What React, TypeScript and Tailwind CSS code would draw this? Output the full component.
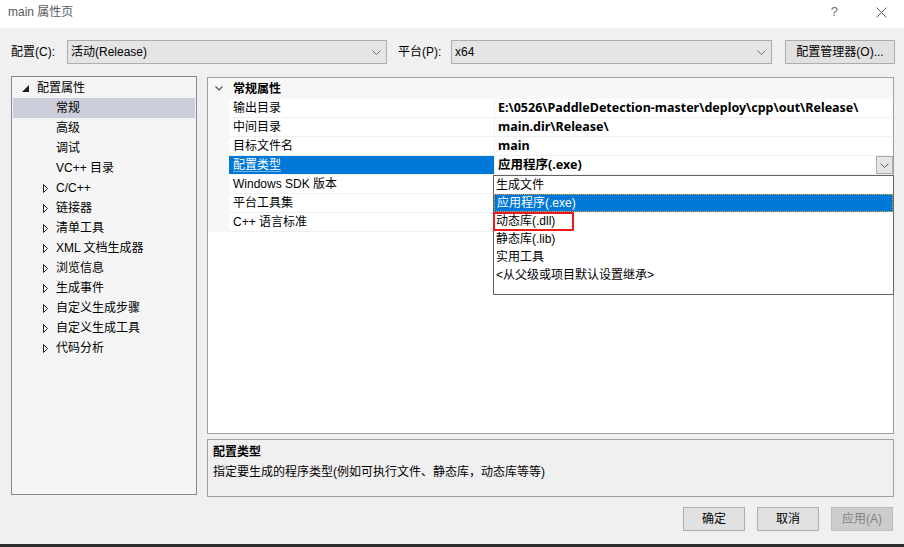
import React from 'react';

type TreeItem = { label: string; level: 0 | 1; arrow?: 'open' | 'closed'; selected?: boolean };

const tree: TreeItem[] = [
  { label: '配置属性', level: 0, arrow: 'open' },
  { label: '常规', level: 1, selected: true },
  { label: '高级', level: 1 },
  { label: '调试', level: 1 },
  { label: 'VC++ 目录', level: 1 },
  { label: 'C/C++', level: 1, arrow: 'closed' },
  { label: '链接器', level: 1, arrow: 'closed' },
  { label: '清单工具', level: 1, arrow: 'closed' },
  { label: 'XML 文档生成器', level: 1, arrow: 'closed' },
  { label: '浏览信息', level: 1, arrow: 'closed' },
  { label: '生成事件', level: 1, arrow: 'closed' },
  { label: '自定义生成步骤', level: 1, arrow: 'closed' },
  { label: '自定义生成工具', level: 1, arrow: 'closed' },
  { label: '代码分析', level: 1, arrow: 'closed' },
];

const props = [
  { name: '输出目录', value: 'E:\\0526\\PaddleDetection-master\\deploy\\cpp\\out\\Release\\' },
  { name: '中间目录', value: 'main.dir\\Release\\' },
  { name: '目标文件名', value: 'main' },
  { name: '配置类型', value: '应用程序(.exe)', selected: true },
  { name: 'Windows SDK 版本', value: '' },
  { name: '平台工具集', value: '' },
  { name: 'C++ 语言标准', value: '' },
];

const options = ['生成文件', '应用程序(.exe)', '动态库(.dll)', '静态库(.lib)', '实用工具', '<从父级或项目默认设置继承>'];

const Chevron = ({ color = '#606060' }: { color?: string }) => (
  <svg width="9" height="5" viewBox="0 0 9 5" fill="none">
    <path d="M0.5 0.5L4.5 4.5L8.5 0.5" stroke={color} strokeWidth="1" />
  </svg>
);

const Select = ({ text, width }: { text: string; width: string }) => (
  <div className={`${width} h-[24px] flex items-center justify-between bg-[#e5e5e5] border border-[#adadad] pl-[3px] pr-[5px]`}>
    <span className="text-[12px] leading-[16px] text-black">{text}</span>
    <Chevron color="#707070" />
  </div>
);

const Button = ({ text, disabled }: { text: string; disabled?: boolean }) => (
  <div
    className={`w-[62px] h-[24px] flex items-center justify-center border text-[12px] leading-[16px] ${
      disabled ? 'bg-[#cccccc] border-[#bfbfbf] text-[#838383]' : 'bg-[#e1e1e1] border-[#adadad] text-black'
    }`}
  >
    {text}
  </div>
);

const App = () => {
  return (
    <div className="w-[904px] h-[547px] flex flex-col bg-[#f0f0f0] overflow-hidden font-['Liberation_Sans','Noto_Sans_CJK_SC',sans-serif] text-black">
      {/* title bar */}
      <div className="h-[28px] bg-white flex items-center pl-[8px]">
        <span className="text-[12px] leading-[16px] text-[#5a5a5a] -mt-[4px]">main 属性页</span>
        <div className="ml-auto flex items-center -mt-[4px]">
          <span className="text-[13px] leading-[16px] text-[#707070] mr-[38px]">?</span>
          <svg width="11" height="11" viewBox="0 0 11 11" className="mr-[17px]">
            <path d="M0.5 0.5L10.5 10.5M10.5 0.5L0.5 10.5" stroke="#606060" strokeWidth="1" />
          </svg>
        </div>
      </div>

      {/* config row */}
      <div className="mt-[12px] h-[24px] flex items-center pl-[11px]">
        <span className="w-[56px] text-[12px] leading-[16px]">配置(C):</span>
        <Select text="活动(Release)" width="w-[320px]" />
        <span className="ml-[11px] w-[53px] text-[12px] leading-[16px]">平台(P):</span>
        <Select text="x64" width="w-[321px]" />
        <div className="ml-[13px] w-[110px] h-[24px] -mt-[1px] flex items-center justify-center bg-[#e1e1e1] border border-[#adadad] text-[12px] leading-[16px]">
          配置管理器(O)...
        </div>
      </div>

      {/* main area */}
      <div className="mt-[12px] h-[421px] flex">
        {/* tree */}
        <div className="ml-[11px] w-[186px] h-[419px] border border-[#828790] bg-[#f5f5f5] pt-px">
          {tree.map((t) => (
            <div
              key={t.label}
              className={`h-[20px] mx-px flex items-center text-[12px] leading-[16px] ${t.selected ? 'bg-[#cccedb]' : ''} ${
                t.level === 0 ? 'pl-[9px]' : t.arrow ? 'pl-[30px]' : 'pl-[43px]'
              }`}
            >
              {t.arrow === 'open' && (
                <svg width="7" height="7" viewBox="0 0 7 7" className="mr-[8px]">
                  <path d="M7 0V7H0Z" fill="#1e1e1e" />
                </svg>
              )}
              {t.arrow === 'closed' && (
                <svg width="5" height="9" viewBox="0 0 5 9" className="mr-[8px]">
                  <path d="M0.5 0.5L4.5 4.5L0.5 8.5Z" fill="none" stroke="#1e1e1e" strokeWidth="1" />
                </svg>
              )}
              <span>{t.label}</span>
            </div>
          ))}
        </div>

        {/* right column */}
        <div className="ml-[10px] w-[687px] flex flex-col">
          <div className="relative mt-px h-[358px] border border-[#a0a0a0] bg-white">
            {/* category */}
            <div className="h-[21px] flex items-center bg-[#f7f7f7]">
              <div className="w-[21px] flex justify-center">
                <svg width="8" height="5" viewBox="0 0 8 5" fill="none">
                  <path d="M0.5 0.5L4 4L7.5 0.5" stroke="#505050" strokeWidth="1.2" />
                </svg>
              </div>
              <span className="pl-[4px] text-[12px] leading-[16px] font-bold">常规属性</span>
            </div>
            {props.map((p) => (
              <div key={p.name} className="h-[19px] flex">
                <div className="w-[21px] bg-[#f7f7f7]" />
                <div
                  className={`w-[265px] flex items-center pl-[4px] text-[12px] leading-[16px] border-b border-[#f0f0f0] ${
                    p.selected ? 'bg-[#0078d7] text-white border-[#0078d7]' : ''
                  }`}
                >
                  <span className={p.selected ? 'underline decoration-[#7fb4e6] underline-offset-2' : ''}>{p.name}</span>
                </div>
                <div className="flex-1 flex items-center border-l border-b border-[#f0f0f0] pl-[3px] text-[12.5px] leading-[16px] font-bold font-['Noto_Sans','Noto_Sans_CJK_SC',sans-serif]">
                  <span>{p.value}</span>
                  {p.selected && (
                    <div className="ml-auto w-[17px] h-[18px] flex items-center justify-center bg-[#e5e5e5] border border-[#adadad]">
                      <Chevron color="#606060" />
                    </div>
                  )}
                </div>
              </div>
            ))}

            {/* open dropdown list */}
            <div className="absolute left-[285px] top-[97px] w-[401px] h-[120px] bg-white border border-[#646464]">
              {options.map((o, i) => (
                <div
                  key={o}
                  className={`relative h-[18px] flex items-center pl-[2px] text-[12px] leading-[16px] ${
                    i === 1 ? 'bg-[#0078d7] text-white border border-dotted border-[#f0a030]' : ''
                  }`}
                >
                  {o}
                  {i === 2 && (
                    <div className="absolute -left-px top-0 w-[81px] h-[19px] border-2 border-[#f01818] rounded-[1px]" />
                  )}
                </div>
              ))}
            </div>
          </div>

          {/* description */}
          <div className="mt-[5px] h-[58px] border border-[#a0a0a0] bg-[#f0f0f0] pl-[5px] pt-[3px]">
            <div className="text-[12px] leading-[18px] font-bold">配置类型</div>
            <div className="text-[12px] leading-[18px] mt-[2px]">指定要生成的程序类型(例如可执行文件、静态库，动态库等等)</div>
          </div>
        </div>
      </div>

      {/* buttons */}
      <div className="mt-[10px] flex justify-end gap-[12px] pr-[11px]">
        <Button text="确定" />
        <Button text="取消" />
        <Button text="应用(A)" disabled />
      </div>

      <div className="flex-1" />
      <div className="h-[3px] bg-[#2d2d2d]" />
    </div>
  );
};

export default App;
